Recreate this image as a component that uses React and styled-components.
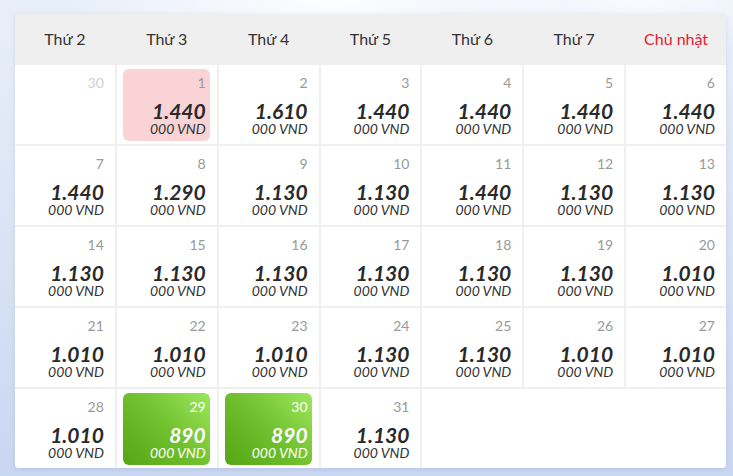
import React from 'react'
import styled, { createGlobalStyle } from 'styled-components'

const GlobalStyle = createGlobalStyle`
    html, body {
        margin: 0;
        padding: 0;
    }
    body {
        width: 733px;
        height: 476px;
        overflow: hidden;
        font-family: Lato, "Noto Sans", sans-serif;
        background:
            radial-gradient(ellipse 260px 60px at 330px 0px, rgba(255,255,255,0.9), rgba(255,255,255,0) 100%),
            radial-gradient(ellipse 200px 50px at 640px 0px, rgba(255,255,255,0.7), rgba(255,255,255,0) 100%),
            linear-gradient(180deg, #e9eff9 0%, #d6e1f4 60%, #c8d6f1 100%);
    }
`

const DAYS = ['Thứ 2', 'Thứ 3', 'Thứ 4', 'Thứ 5', 'Thứ 6', 'Thứ 7', 'Chủ nhật']

// kind: prev | selected | cheap | (none = normal)
const CELLS = [
    { day: 30, kind: 'prev' },
    { day: 1, price: '1.440', kind: 'selected' },
    { day: 2, price: '1.610' },
    { day: 3, price: '1.440' },
    { day: 4, price: '1.440' },
    { day: 5, price: '1.440' },
    { day: 6, price: '1.440' },
    { day: 7, price: '1.440' },
    { day: 8, price: '1.290' },
    { day: 9, price: '1.130' },
    { day: 10, price: '1.130' },
    { day: 11, price: '1.440' },
    { day: 12, price: '1.130' },
    { day: 13, price: '1.130' },
    { day: 14, price: '1.130' },
    { day: 15, price: '1.130' },
    { day: 16, price: '1.130' },
    { day: 17, price: '1.130' },
    { day: 18, price: '1.130' },
    { day: 19, price: '1.130' },
    { day: 20, price: '1.010' },
    { day: 21, price: '1.010' },
    { day: 22, price: '1.010' },
    { day: 23, price: '1.010' },
    { day: 24, price: '1.130' },
    { day: 25, price: '1.130' },
    { day: 26, price: '1.010' },
    { day: 27, price: '1.010' },
    { day: 28, price: '1.010' },
    { day: 29, price: '890', kind: 'cheap' },
    { day: 30, price: '890', kind: 'cheap' },
    { day: 31, price: '1.130' },
]

const App = () => {
    return (
        <>
            <GlobalStyle />
            <Card>
                {DAYS.map((d, i) => (
                    <HeadCell key={d} $sunday={i === 6}>{d}</HeadCell>
                ))}
                {CELLS.map((c, i) => (
                    <Cell key={i}>
                        <Box $kind={c.kind}>
                            <DayNum $kind={c.kind}>{c.day}</DayNum>
                            {c.price && (
                                <>
                                    <Price $kind={c.kind}>{c.price}</Price>
                                    <Unit $kind={c.kind}>000 VND</Unit>
                                </>
                            )}
                        </Box>
                    </Cell>
                ))}
                <Filler />
            </Card>
        </>
    )
}

const Card = styled.div`
    margin: 14px 0 0 15px;
    width: 711px;
    display: grid;
    grid-template-columns: repeat(7, 1fr);
    grid-template-rows: 49px repeat(5, 79px);
    column-gap: 2px;
    row-gap: 2px;
    background: #efefef;
    border-radius: 4px;
    overflow: hidden;
    box-shadow: 0 1px 4px rgba(80, 100, 140, 0.15);
`
const HeadCell = styled.div`
    display: flex;
    align-items: center;
    justify-content: center;
    font-size: 16px;
    color: ${p => p.$sunday ? '#e8202f' : '#333'};
    margin: 0 -1px;
    background: #efefef;
`
const Cell = styled.div`
    background: #fff;
    padding: 4px 7px 3px 6px;
    display: flex;
`
const Filler = styled.div`
    grid-column: span 3;
    background: #fff;
`
const boxBg = {
    selected: '#f9d3d5',
    cheap: 'linear-gradient(225deg, #9ce85e 0%, #71c02e 50%, #55a514 100%)',
}
const Box = styled.div`
    flex: 1;
    display: flex;
    flex-direction: column;
    align-items: flex-end;
    padding: 6px 4px 5px 4px;
    border-radius: 6px;
    background: ${p => boxBg[p.$kind] || 'transparent'};
`
const DayNum = styled.div`
    font-size: 14px;
    line-height: 16px;
    color: ${p => p.$kind === 'prev' ? '#d0d0d0' : p.$kind === 'cheap' ? '#fff' : '#999'};
`
const Price = styled.div`
    margin-top: auto;
    font-size: 21px;
    line-height: 22px;
    font-weight: 700;
    font-style: italic;
    color: ${p => p.$kind === 'cheap' ? '#fff' : '#2a2a2a'};
`
const Unit = styled.div`
    font-size: 14px;
    line-height: 14px;
    font-style: italic;
    color: ${p => p.$kind === 'cheap' ? '#fff' : '#333'};
`

export default App
